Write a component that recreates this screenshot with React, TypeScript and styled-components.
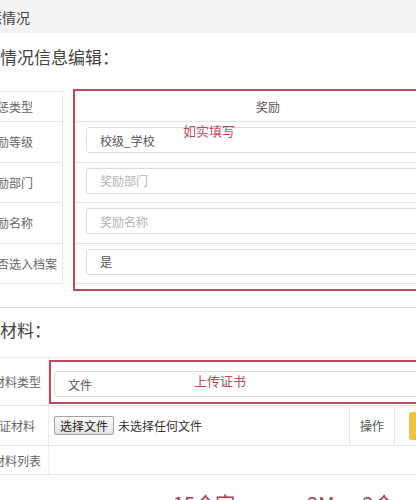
import styled, { createGlobalStyle } from "styled-components";

const rewardRows = [
  { label: "奖励等级", value: "校级_学校", placeholder: false },
  { label: "奖励部门", value: "奖励部门", placeholder: true },
  { label: "奖励名称", value: "奖励名称", placeholder: true },
  { label: "是否选入档案", value: "是", placeholder: false },
];

function App() {
  return (
    <Page>
      <GlobalStyles />
      <TopBar>奖惩情况</TopBar>
      <SectionTitle $height={46}>奖惩情况信息编辑：</SectionTitle>

      <RewardBlock>
        <LabelCol>
          <LabelCell $first>奖惩类型</LabelCell>
          {rewardRows.map((r) => (
            <LabelCell key={r.label}>{r.label}</LabelCell>
          ))}
        </LabelCol>
        <RedPanel>
          <TypeRow>奖励</TypeRow>
          {rewardRows.map((r) => (
            <ValueRow key={r.label}>
              <Field $placeholder={r.placeholder}>{r.value}</Field>
            </ValueRow>
          ))}
          <Note style={{ left: 108, top: 33 }}>如实填写</Note>
        </RedPanel>
      </RewardBlock>

      <Divider />
      <SectionTitle $height={42}>佐证材料：</SectionTitle>

      <MaterialTable>
        <MatRow $height={47}>
          <MatLabel>材料类型</MatLabel>
          <MatValue>
            <RedBox>
              <Field $placeholder={false}>文件</Field>
              <Note style={{ left: 143, top: 12 }}>上传证书</Note>
            </RedBox>
          </MatValue>
        </MatRow>
        <MatRow $height={39}>
          <MatLabel $indent={17}>佐证材料</MatLabel>
          <FileCell>
            <FileButton>选择文件</FileButton>
            <FileText>未选择任何文件</FileText>
          </FileCell>
          <ActionHead>操作</ActionHead>
          <ActionCell>
            <YellowButton>上传</YellowButton>
          </ActionCell>
        </MatRow>
        <MatRow $height={28}>
          <MatLabel>材料列表</MatLabel>
          <MatValue />
        </MatRow>
      </MaterialTable>

      <HintRow>
        <Hint $left={213}>15个字</Hint>
        <Hint $left={72}>2M</Hint>
        <Hint $left={28}>2个</Hint>
      </HintRow>
    </Page>
  );
}

export default App;

const GlobalStyles = createGlobalStyle`
  html, body {
    margin: 0;
    padding: 0;
    width: 416px;
    height: 500px;
    overflow: hidden;
    background: #fff;
  }
`;

const Page = styled.div`
  margin-left: -40px;
  width: 520px;
  font-family: "Noto Sans CJK SC", "Noto Sans", sans-serif;
  color: #555;
`;

const TopBar = styled.div`
  height: 33px;
  background: #f3f3f3;
  padding-left: 14px;
  display: flex;
  align-items: center;
  font-size: 14px;
  color: #444;
`;

const SectionTitle = styled.h2<{ $height: number }>`
  margin: 0;
  height: ${(p) => p.$height}px;
  padding-left: 6px;
  display: flex;
  align-items: center;
  font-size: 17px;
  font-weight: 400;
  color: #444;
`;

const RewardBlock = styled.div`
  display: flex;
  align-items: flex-start;
  gap: 10px;
  margin: 10px 0 0 10px;
`;

const LabelCol = styled.div`
  width: 93px;
  margin-top: 2px;
  border-top: 1px solid #e6e6e6;
  border-right: 1px solid #e6e6e6;
  box-sizing: border-box;
`;

const LabelCell = styled.div<{ $first?: boolean }>`
  height: ${(p) => (p.$first ? 29 : 39.5)}px;
  border-bottom: 1px solid #e6e6e6;
  padding-left: 15px;
  display: flex;
  align-items: center;
  font-size: 12px;
  color: #666;
  white-space: nowrap;
`;

const RedPanel = styled.div`
  position: relative;
  width: 390px;
  box-sizing: border-box;
  border: 2px solid #bd4a5c;
  padding-bottom: 5px;
`;

const TypeRow = styled.div`
  height: 30px;
  border-bottom: 1px solid #e3e3e3;
  display: flex;
  align-items: center;
  justify-content: center;
  font-size: 12px;
  color: #555;
`;

const ValueRow = styled.div`
  height: 40.5px;
  box-sizing: border-box;
  border-bottom: 1px solid #e3e3e3;
  padding: 5px 11px 0;
`;

const Field = styled.div<{ $placeholder: boolean }>`
  height: 26px;
  box-sizing: border-box;
  border: 1px solid #dcdcdc;
  border-radius: 3px;
  background: #fff;
  padding-left: 13px;
  display: flex;
  align-items: center;
  font-size: 12px;
  color: ${(p) => (p.$placeholder ? "#b4b4b4" : "#555")};
`;

const Note = styled.span`
  position: absolute;
  font-size: 13px;
  line-height: 14px;
  color: #c24a5a;
  white-space: nowrap;
`;

const Divider = styled.div`
  margin-top: 16px;
  height: 1px;
  background: #dedede;
`;

const MaterialTable = styled.div`
  margin: 7px 0 0 10px;
  border-top: 1px solid #ececec;
`;

const MatRow = styled.div<{ $height: number }>`
  display: flex;
  height: ${(p) => p.$height}px;
  border-bottom: 1px solid #e3e3e3;
`;

const MatLabel = styled.div<{ $indent?: number }>`
  width: 79px;
  flex-shrink: 0;
  box-sizing: border-box;
  border-right: 1px solid #ececec;
  padding-left: ${(p) => p.$indent ?? 23}px;
  display: flex;
  align-items: center;
  font-size: 12px;
  color: #666;
  white-space: nowrap;
  overflow: hidden;
`;

const MatValue = styled.div`
  flex: 1;
  padding-top: 2px;
`;

const RedBox = styled.div`
  position: relative;
  height: 44px;
  box-sizing: border-box;
  border: 2px solid #bd4a5c;
  padding: 9px 0 0 3px;
`;

const FileCell = styled.div`
  width: 301px;
  box-sizing: border-box;
  border-right: 1px solid #e6e6e6;
  padding-left: 5px;
  display: flex;
  align-items: center;
  gap: 4px;
`;

const FileButton = styled.button`
  height: 19px;
  padding: 0 5px;
  border: 1px solid #a3a3a3;
  border-radius: 2px;
  background: linear-gradient(#fafafa, #e4e4e4);
  font-family: inherit;
  font-size: 12px;
  line-height: 17px;
  color: #222;
`;

const FileText = styled.span`
  font-size: 12px;
  color: #333;
`;

const ActionHead = styled.div`
  width: 45px;
  box-sizing: border-box;
  border-right: 1px solid #e6e6e6;
  display: flex;
  align-items: center;
  justify-content: center;
  font-size: 12px;
  color: #555;
`;

const ActionCell = styled.div`
  padding-left: 14px;
  display: flex;
  align-items: center;
`;

const YellowButton = styled.button`
  width: 60px;
  height: 28px;
  border: none;
  border-radius: 3px;
  background: #f2c23a;
  color: #fff;
  font-family: inherit;
  font-size: 12px;
`;

const HintRow = styled.div`
  display: flex;
  margin-top: 19px;
  font-size: 20px;
  line-height: 20px;
  color: #b03a48;
  white-space: nowrap;
`;

const Hint = styled.span<{ $left: number }>`
  margin-left: ${(p) => p.$left}px;
`;
